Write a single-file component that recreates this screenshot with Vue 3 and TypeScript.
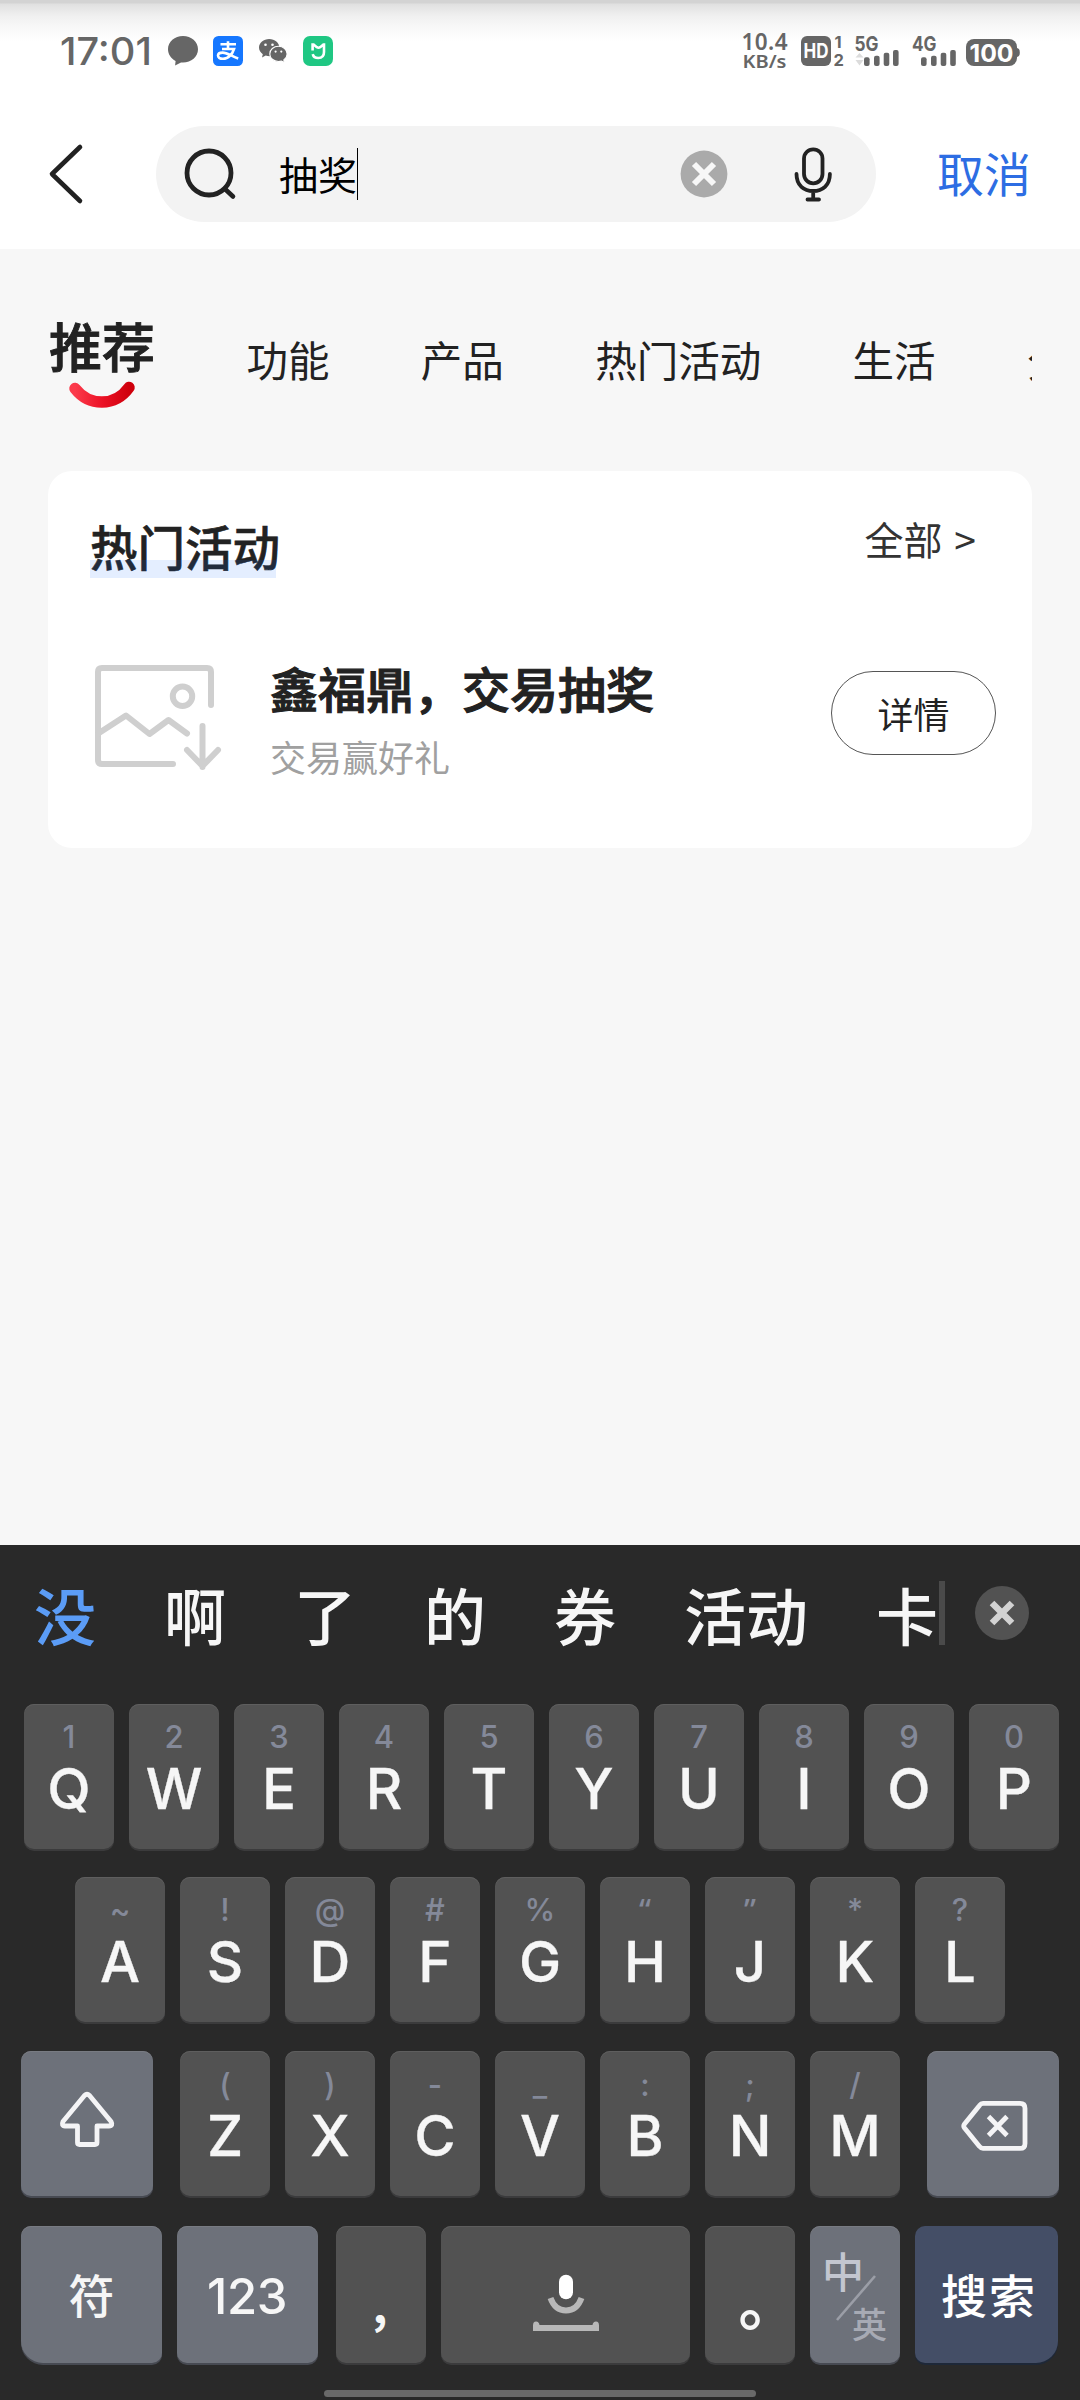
<script setup lang="ts">
interface LetterKey {
  main: string
  hint: string
}

const toKeys = (letters: string, hints: string[]): LetterKey[] =>
  letters.split('').map((main, i) => ({ main, hint: hints[i] }))

const topRow = toKeys('QWERTYUIOP', ['1', '2', '3', '4', '5', '6', '7', '8', '9', '0'])
const homeRow = toKeys('ASDFGHJKL', ['~', '!', '@', '#', '%', '“', '”', '*', '?'])
const bottomRow = toKeys('ZXCVBNM', ['(', ')', '-', '_', ':', ';', '/'])

const isQuote = (hint: string): boolean => hint === '“' || hint === '”'

const tabs: string[] = ['功能', '产品', '热门活动', '生活', '分类']
const candidates: string[] = ['没', '啊', '了', '的', '券', '活动', '卡']
const query = '抽奖'
</script>

<template>
  <div class="screen">
    <header class="top">
      <div class="status">
        <div class="status-left">
          <svg width="93" height="36" viewBox="0 0 93 36">
            <text class="clock" x="-1" y="31.500" textLength="92" lengthAdjust="spacingAndGlyphs">17:01</text>
          </svg>
          <svg class="bubble" width="30" height="36" viewBox="0 0 30 36">
            <path
              d="M15 3C6.700 3 0 8.800 0 16.300c0 5 3 9.300 7.600 11.700l-.5 4.400 5.900-2.900 2 .1c8.300 0 15-5.900 15-13.300S23.300 3 15 3z"
              fill="#666" />
          </svg>
          <svg width="30" height="36" viewBox="0 0 30 36">
            <rect y="3" width="30" height="30" rx="5.500" fill="#1677ff" />
            <g fill="none" stroke="#fff" stroke-width="2.600">
              <path d="M7.500 11.300h15.500M15 8.300v7.500M9 16h12c-1.600 5-5.500 9.800-11 9.800-3.500 0-5-1.500-5-3.200 0-1.700 1.700-3 4.600-3 4.600 0 9.400 3.800 15.600 6" />
            </g>
          </svg>
          <svg class="wechat" width="28" height="36" viewBox="0 0 28 36">
            <path
              d="M10.200 6C4.600 6 0 9.800 0 14.600c0 2.700 1.500 5 3.800 6.600L3 24.600l3.700-2a14 14 0 0 0 4 .6C16 23 20.400 19.500 20.400 14.600 20.400 9.800 15.800 6 10.200 6z"
              fill="#666" />
            <path
              d="M19.500 13.300c-4.900 0-8.700 3.400-8.700 7.600s3.800 7.600 8.700 7.600c1 0 2-.2 3-.5l3.200 1.800-.9-2.900c2-1.400 3.300-3.500 3.300-6 0-4.200-3.800-7.600-8.600-7.600z"
              fill="#666" stroke="#fff" stroke-width="1.100" />
            <g fill="#fff">
              <circle cx="6.500" cy="11.800" r="1.300" />
              <circle cx="13.500" cy="11.800" r="1.300" />
              <circle cx="16.600" cy="18.600" r="1.100" />
              <circle cx="22.300" cy="18.600" r="1.100" />
            </g>
          </svg>
          <svg width="30" height="36" viewBox="0 0 30 36">
            <rect y="3" width="30" height="30" rx="7" fill="#1fc783" />
            <path d="M9.600 17.500V11.500h1l3.200 2.700q1.700 1 3.400 0l3.200-2.700h.600v7.500c0 4-2.500 6-5.700 6-2.800 0-5-1.500-5.600-3.900" fill="none"
              stroke="#fff" stroke-width="2.600" />
          </svg>
        </div>
        <div class="status-right">
          <svg class="speed" width="46" height="38" viewBox="0 0 46 38">
            <text x="-0.500" y="17" textLength="46" font-size="22.500">10.4</text>
            <text x="0.500" y="34.700" textLength="44" lengthAdjust="spacingAndGlyphs" font-size="18.500">KB/s</text>
          </svg>
          <svg class="hd" width="44" height="38" viewBox="0 0 44 38">
            <rect y="3" width="30" height="30" rx="6" fill="#666" />
            <text x="2.500" y="25" textLength="25" lengthAdjust="spacingAndGlyphs" font-size="19.500"
              class="on-dark heavy">HD</text>
            <text x="33.500" y="15" font-size="16.500" class="heavy">1</text>
            <text x="32.500" y="32.700" font-size="16.500" class="heavy">2</text>
          </svg>
          <svg class="signal" width="44" height="38" viewBox="0 0 44 38">
            <text x="-0.500" y="18" textLength="24" lengthAdjust="spacingAndGlyphs" font-size="20.500"
              class="heavy">5G</text>
            <path d="M.5 24.500l4-4.500 4 4.500zM.5 27l4 5.500 4-5.500z" fill="#dcdcdc" />
            <g fill="#666">
              <rect x="9" y="24.300" width="5.600" height="8.700" rx="2" />
              <rect x="19" y="22.700" width="5.600" height="10.300" rx="2" />
              <rect x="28.700" y="19.700" width="5.600" height="13.300" rx="2" />
              <rect x="38" y="17" width="5.600" height="16" rx="2" />
            </g>
          </svg>
          <svg class="signal" width="45" height="38" viewBox="0 0 45 38">
            <text x="0" y="18" textLength="24.500" lengthAdjust="spacingAndGlyphs" font-size="20.500"
              class="heavy">4G</text>
            <g fill="#666">
              <rect x="9" y="24.300" width="5.600" height="8.700" rx="2" />
              <rect x="19" y="22.700" width="5.600" height="10.300" rx="2" />
              <rect x="28.700" y="19.700" width="5.600" height="13.300" rx="2" />
              <rect x="38.200" y="17" width="5.600" height="16" rx="2" />
            </g>
          </svg>
          <svg width="54" height="38" viewBox="0 0 54 38">
            <rect y="6" width="51" height="27" rx="8" fill="#666" />
            <path d="M51 15c1.800.3 2.800 1.600 2.800 4.500s-1 4.200-2.800 4.500z" fill="#666" />
            <text x="3.500" y="28.600" textLength="44" lengthAdjust="spacingAndGlyphs" font-size="24.500"
              class="on-dark heavy">100</text>
          </svg>
        </div>
      </div>

      <div class="search-row">
        <svg class="back" width="36" height="62" viewBox="0 0 36 62">
          <path d="M32 4L4 31l28 27" fill="none" stroke="#222" stroke-width="4.600" stroke-linecap="round"
            stroke-linejoin="round" />
        </svg>
        <div class="search-box">
          <svg class="glass" width="54" height="54" viewBox="0 0 54 54">
            <circle cx="27" cy="26" r="22" fill="none" stroke="#222" stroke-width="4.800" />
            <path d="M43 42l8 7.500" stroke="#222" stroke-width="4.600" stroke-linecap="round" />
          </svg>
          <span class="query">{{ query }}</span>
          <i class="caret"></i>
          <svg class="clear" width="48" height="48" viewBox="0 0 48 48">
            <circle cx="24" cy="24" r="23.400" fill="#aaa" />
            <path d="M14 14l20 20M34 14L14 34" stroke="#f7f7f7" stroke-width="6" />
          </svg>
          <svg class="mic" width="40" height="56" viewBox="0 0 40 56">
            <g fill="none" stroke="#222" stroke-width="3.800" stroke-linecap="round">
              <rect x="11" y="3.300" width="18.500" height="34" rx="9.250" />
              <path d="M3.500 28c0 11.500 7.500 17 16.700 17s16.700-5.500 16.700-17M20.200 45v8M14.500 53.500h11.500" />
            </g>
          </svg>
        </div>
        <span class="cancel">取消</span>
      </div>
    </header>

    <main class="content">
      <nav class="tabs">
        <div class="tab-active">
          <span>推荐</span>
          <svg width="68" height="30" viewBox="0 0 68 30">
            <defs>
              <linearGradient id="smile" x1="0" y1="0" x2="1" y2="0">
                <stop offset="0" stop-color="#fb3a4b" />
                <stop offset="0.500" stop-color="#ec1226" />
                <stop offset="1" stop-color="#cf000c" />
              </linearGradient>
            </defs>
            <path d="M7 7.500C21 25.500 47 26 61 6.500" fill="none" stroke="url(#smile)" stroke-width="11.500"
              stroke-linecap="round" />
          </svg>
        </div>
        <span v-for="tab in tabs" :key="tab" class="tab">{{ tab }}</span>
      </nav>

      <section class="card">
        <div class="card-head">
          <h2>热门活动</h2>
          <span class="all">全部 &gt;</span>
        </div>
        <div class="item">
          <svg class="thumb" width="128" height="108" viewBox="0 0 128 108">
            <g fill="none" stroke="#cfcfcf" stroke-width="6" stroke-linecap="round" stroke-linejoin="round">
              <path d="M116 41V8q0-4-4-4H7Q3 4 3 8v88q0 4 4 4h71" />
              <circle cx="87.500" cy="32.200" r="9.700" />
              <path d="M4 69l27-17.500L54.500 70l19-14 18.500 13.500M107.500 62v41M92 86l15.500 16L123 86" />
            </g>
          </svg>
          <div class="item-text">
            <strong>鑫福鼎，交易抽奖</strong>
            <span>交易赢好礼</span>
          </div>
          <button class="detail" type="button">详情</button>
        </div>
      </section>
    </main>

    <section class="keyboard">
      <div class="suggest">
        <div class="words">
          <span v-for="word in candidates" :key="word">{{ word }}</span>
        </div>
        <i class="divider"></i>
        <svg class="dismiss" width="54" height="54" viewBox="0 0 54 54">
          <circle cx="27" cy="27" r="27" fill="#525252" />
          <path d="M17 17l20 20M37 17L17 37" stroke="#d2d2d2" stroke-width="6.500" />
        </svg>
      </div>

      <div class="row row-1">
        <div v-for="key in topRow" :key="key.main" class="key">
          <small>{{ key.hint }}</small>
          <b>{{ key.main }}</b>
        </div>
      </div>
      <div class="row row-2">
        <div v-for="key in homeRow" :key="key.main" class="key">
          <small :class="{ quote: isQuote(key.hint) }">{{ key.hint }}</small>
          <b>{{ key.main }}</b>
        </div>
      </div>
      <div class="row row-3">
        <div class="key tool shift">
          <svg width="132" height="145" viewBox="0 0 132 145">
            <path
              d="M63.500 44.500L42 70.500q-2 4.500 2 4.500h12.500v16.500q0 2 2 2h15.500q2 0 2-2V75H88q4.500 0 2-4.500L68.500 44.500q-2.500-2.500-5 0z"
              fill="none" stroke="#f4f4f6" stroke-width="4.800" stroke-linejoin="round" />
          </svg>
        </div>
        <div v-for="key in bottomRow" :key="key.main" class="key">
          <small>{{ key.hint }}</small>
          <b>{{ key.main }}</b>
        </div>
        <div class="key tool erase">
          <svg width="132" height="145" viewBox="0 0 132 145">
            <g fill="none" stroke="#f4f4f6" stroke-width="4.800" stroke-linejoin="round">
              <path d="M56 52.400h37q5 0 5 5v35q0 5-5 5H56q-2 0-3.500-2L37.500 77q-1.500-2 0-4l15-18.600q1.500-2 3.500-2z" />
              <path d="M61.500 65.500l18.500 19M80 65.500l-18.500 19" />
            </g>
          </svg>
        </div>
      </div>
      <div class="row row-4">
        <div class="key tool symbols">符</div>
        <div class="key tool digits">123</div>
        <div class="key mark comma">,</div>
        <div class="key space">
          <svg width="249" height="137" viewBox="0 0 249 137">
            <rect x="118" y="48.700" width="14" height="24.500" rx="7" fill="#fff" />
            <path d="M109.500 72q4.500 12.500 15.500 12.500t15.500-12.500" fill="none" stroke="#b8b8b8" stroke-width="6" />
            <path d="M92 105v-5.500q0-4 3-4t3.500 3.500h53q.5-3.500 3.500-3.500t3 4v5.500z" fill="#b8b8b8" />
          </svg>
        </div>
        <div class="key mark stop">。</div>
        <div class="key tool lang">
          <span class="zh">中</span>
          <svg width="42" height="48" viewBox="0 0 42 48">
            <path d="M40 2L2 46" stroke="#9b9ea7" stroke-width="2.600" />
          </svg>
          <span class="en">英</span>
        </div>
        <div class="key go">搜索</div>
      </div>
      <div class="home-bar"></div>
    </section>
  </div>
</template>

<style>
body {
  margin: 0;
}
</style>

<style scoped>
.screen {
  width: 1080px;
  height: 2400px;
  display: flex;
  flex-direction: column;
  overflow: hidden;
  background: #f7f7f7;
  color: #222;
  font-family: "Noto Sans CJK SC", sans-serif;
}

svg {
  display: block;
  flex: none;
  overflow: visible;
}

/* ---------- status bar and search ---------- */
.top {
  height: 249px;
  background: linear-gradient(#d3d3d3 0, #d3d3d3 3px, #e0e0e0 4px, #f0f0f0 16px, #f8f8f8 27px, #fff 42px);
}

.status {
  display: flex;
  justify-content: space-between;
  height: 65px;
  padding: 33px 60px 0 61px;
}

.status-left,
.status-right {
  display: flex;
}

.status text {
  font-family: Inter, sans-serif;
  fill: #666;
  font-weight: 600;
}

.status text.clock {
  font-size: 38px;
  font-weight: 500;
}

.status .speed text {
  font-family: "Noto Sans", sans-serif;
}

.status text.heavy {
  font-weight: 700;
}

.status text.on-dark {
  fill: #fff;
}

.bubble {
  margin: 0 15px 0 14px;
}

.wechat {
  margin: 0 16px;
}

.hd {
  margin: 0 10px 0 13px;
}

.signal {
  margin-right: 13px;
}

.signal + .signal {
  margin-right: 9px;
}

.search-row {
  display: flex;
  align-items: center;
  height: 151px;
  padding-left: 48px;
}

.search-box {
  display: flex;
  align-items: center;
  box-sizing: border-box;
  width: 720px;
  height: 96px;
  margin-left: 72px;
  padding-left: 26px;
  border-radius: 48px;
  background: #f3f3f3;
}

.query {
  margin-left: 43px;
  padding-bottom: 2px;
  font-size: 39px;
  line-height: 52px;
  color: #000;
}

.caret {
  width: 1px;
  height: 52px;
  margin-right: 322px;
  background: #000;
}

.mic {
  margin-left: 65px;
}

.cancel {
  margin-left: 61px;
  padding-bottom: 3px;
  font-size: 47px;
  line-height: 60px;
  color: #2d6de3;
}

/* ---------- result list ---------- */
.content {
  flex: 1;
  padding: 0 48px;
}

.tabs {
  display: flex;
  align-items: flex-start;
  height: 222px;
  overflow: hidden;
  white-space: nowrap;
}

.tab-active {
  width: 108px;
  margin-right: 91.500px;
  padding-top: 61px;
}

.tab-active span {
  display: block;
  padding-left: 1px;
  font-size: 53px;
  font-weight: 500;
  line-height: 70px;
  -webkit-text-stroke: 0.900px #222;
}

.tab-active svg {
  margin: 1px 0 0 20px;
}

.tab {
  margin-right: 91.300px;
  padding-top: 80px;
  font-size: 41.500px;
  line-height: 60px;
}

.card {
  box-sizing: border-box;
  height: 377px;
  border-radius: 24px;
  background: #fff;
}

.card-head {
  display: flex;
  justify-content: space-between;
  height: 160px;
  padding: 0 56px 0 42px;
}

h2 {
  position: relative;
  height: 64px;
  margin: 43px 0 0;
  font-size: 47.500px;
  font-weight: 500;
  line-height: 64px;
  -webkit-text-stroke: 0.600px #222;
}

h2::after {
  content: "";
  position: absolute;
  left: 0;
  bottom: 0;
  width: 186px;
  height: 18px;
  background: rgba(33, 112, 255, 0.120);
}

.all {
  margin-top: 39px;
  font-size: 39px;
  line-height: 56px;
  word-spacing: 3px;
  color: #333;
}

.item {
  display: flex;
  align-items: flex-start;
  padding: 33px 36px 0 47px;
}

.item-text {
  display: flex;
  flex-direction: column;
  flex: 1;
  margin: -8px 0 0 47px;
}

.item-text strong {
  font-size: 48px;
  font-weight: 500;
  line-height: 63px;
  -webkit-text-stroke: 1.100px #222;
}

.item-text span {
  margin-top: 13px;
  font-size: 36px;
  line-height: 48px;
  color: #a0a0a0;
}

.detail {
  width: 165px;
  height: 84px;
  margin-top: 7px;
  padding: 0;
  border: 1px solid #555;
  border-radius: 42px;
  background: #fff;
  color: #222;
  font: 400 36px/80px "Noto Sans CJK SC", sans-serif;
}

/* ---------- keyboard ---------- */
.keyboard {
  display: flex;
  flex-direction: column;
  height: 855px;
  background: #292929;
}

.suggest {
  display: flex;
  height: 159px;
  padding-left: 34px;
}

.words {
  display: flex;
  gap: 68px;
  width: 905px;
  overflow: hidden;
  white-space: nowrap;
  color: #f6f6f6;
  font-size: 62px;
  font-weight: 500;
  line-height: 138px;
}

.words span:first-child {
  color: #5b9cf6;
}

.divider {
  width: 6px;
  height: 64px;
  margin-top: 36px;
  background: #4a4a4a;
}

.dismiss {
  margin: 41px 0 0 30px;
}

.row {
  display: flex;
  gap: 15px;
  height: 145px;
}

.row-1 {
  padding-left: 24px;
}

.row-2 {
  margin-top: 28px;
  padding-left: 75px;
}

.row-3 {
  margin-top: 29px;
  padding-left: 21px;
}

.row-4 {
  height: 137px;
  margin-top: 30px;
  padding-left: 21px;
}

.key {
  display: flex;
  flex-direction: column;
  align-items: center;
  flex: none;
  width: 90px;
  border-radius: 10px;
  background: #525252;
  box-shadow: 0 2px 0 #3b3b3c, inset 0 1px 0 #5e5e5e;
  color: #f6f6f6;
  font-family: Inter, sans-serif;
}

.key small {
  height: 38px;
  margin-top: 12px;
  color: #848999;
  font-size: 31px;
  font-weight: 500;
  line-height: 41px;
}

.key small.quote {
  font-family: "Noto Sans", sans-serif;
}

.key b {
  font-size: 56.500px;
  font-weight: 500;
  line-height: 70px;
  -webkit-text-stroke: 0.300px #f6f6f6;
}

.row-3 .key small {
  height: 37px;
  margin-top: 13px;
}

.tool {
  background: #6d717a;
  box-shadow: 0 2px 0 #474a52, inset 0 1px 0 #787b82;
}

.shift {
  width: 132px;
  margin-right: 12px;
}

.erase {
  width: 132px;
  margin-left: 12px;
}

.symbols,
.digits,
.go {
  width: 141px;
  line-height: 134px;
}

.symbols {
  border-bottom-left-radius: 22px;
  font-family: "Noto Sans CJK SC", sans-serif;
  font-size: 46px;
  font-weight: 500;
}

.digits {
  margin-right: 3px;
  font-size: 49px;
  font-weight: 500;
  letter-spacing: -0.500px;
  line-height: 142px;
  text-indent: -1px;
}

.mark {
  font-family: "Noto Sans CJK SC", sans-serif;
  font-weight: 700;
}

.comma {
  font-size: 46px;
  line-height: 154px;
  text-indent: -2px;
}

.space {
  width: 249px;
}

.stop {
  font-size: 60px;
  line-height: 146px;
  text-indent: 37px;
}

.lang {
  align-items: flex-start;
  font-family: "Noto Sans CJK SC", sans-serif;
}

.lang .zh {
  margin: 23px 0 0 12px;
  font-size: 42px;
  font-weight: 500;
  line-height: 42px;
  color: #c3c6d0;
}

.lang svg {
  margin: -17px 0 0 25px;
}

.lang .en {
  margin: -17px 0 0 42px;
  font-size: 35px;
  font-weight: 500;
  line-height: 35px;
  color: #a7aab4;
}

.go {
  width: 143px;
  border-bottom-right-radius: 22px;
  background: #444e66;
  box-shadow: 0 2px 0 #1e2838;
  color: #fff;
  font-family: "Noto Sans CJK SC", sans-serif;
  font-size: 46px;
  font-weight: 500;
  letter-spacing: 2px;
  text-indent: 5px;
}

.home-bar {
  width: 432px;
  height: 7px;
  margin: 27px auto 0;
  border-radius: 4px;
  background: #696969;
}
</style>
